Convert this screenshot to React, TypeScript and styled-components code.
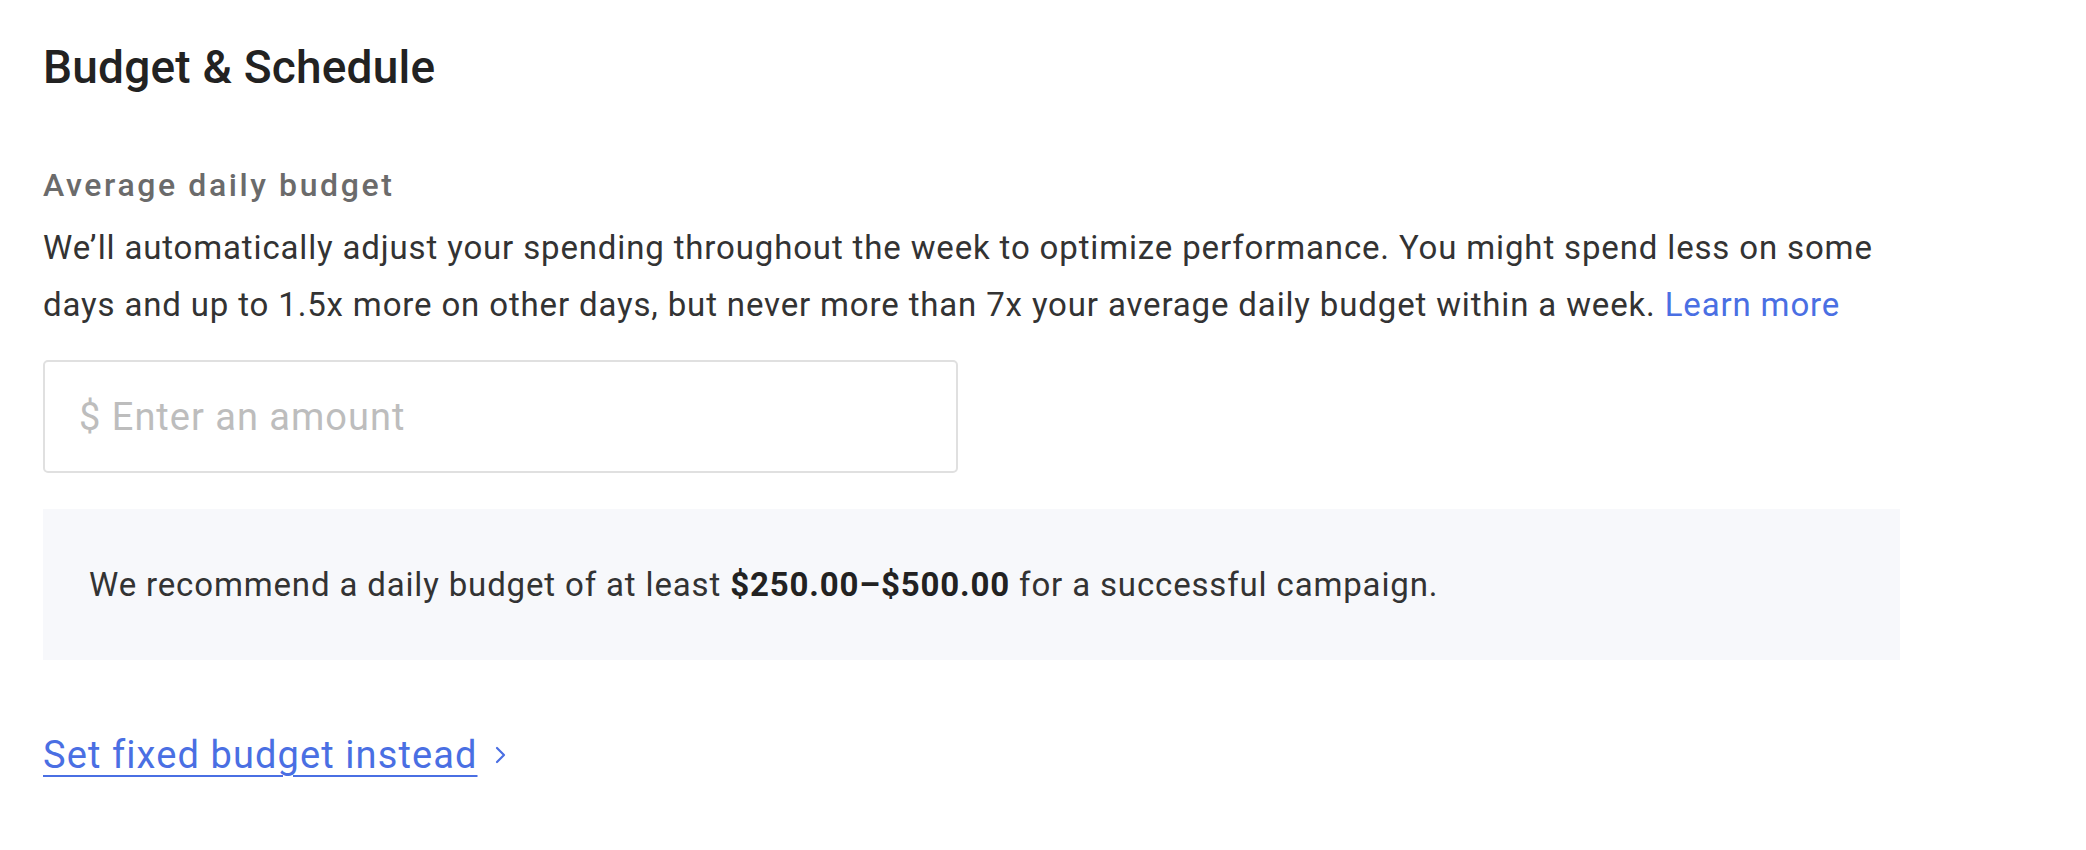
import React from 'react';
import styled, { createGlobalStyle } from 'styled-components';

const GlobalStyle = createGlobalStyle`
  body {
    margin: 0;
    background: #fff;
    font-family: Roboto, "Liberation Sans", sans-serif;
  }
`;

const Page = styled.div`
  padding: 41px 0 0 43px;
  width: 1857px;
`;

const Title = styled.h2`
  margin: 0;
  font-size: 46px;
  line-height: 52px;
  font-weight: 500;
  letter-spacing: 0.2px;
  color: #222;
`;

const FieldLabel = styled.div`
  margin-top: 74px;
  font-size: 32px;
  line-height: 36px;
  font-weight: 500;
  letter-spacing: 2.6px;
  color: #6b6b6b;
`;

const Help = styled.p`
  margin: 16px 0 0;
  font-size: 33px;
  line-height: 57px;
  letter-spacing: 0.85px;
  color: #333;
`;

const Link = styled.a`
  color: #4a6fe3;
  text-decoration: none;
  cursor: pointer;
`;

const AmountInput = styled.input`
  display: block;
  box-sizing: border-box;
  margin-top: 27px;
  width: 915px;
  height: 113px;
  padding: 0 34px;
  border: 2px solid #e0e0e0;
  border-radius: 5px;
  font-family: inherit;
  font-size: 38px;
  letter-spacing: 1px;
  color: #333;
  outline: none;
  &::placeholder {
    color: #bdbdbd;
  }
`;

const Notice = styled.div`
  margin-top: 36px;
  height: 151px;
  display: flex;
  align-items: center;
  padding: 0 46px;
  background: #f7f8fb;
  font-size: 33px;
  line-height: 40px;
  letter-spacing: 0.85px;
  color: #333;
  b {
    font-weight: 700;
    color: #222;
  }
`;

const SwitchRow = styled.div`
  margin-top: 73px;
  display: flex;
  align-items: center;
  gap: 16px;
`;

const SwitchLink = styled(Link)`
  font-size: 38px;
  line-height: 44px;
  letter-spacing: 1.1px;
  text-decoration: underline;
  text-decoration-thickness: 2px;
  text-underline-offset: 7px;
`;

const Chevron = () => (
  <svg width="14" height="20" viewBox="0 0 14 20" fill="none">
    <path d="M3 3l7 7-7 7" stroke="#4a6fe3" strokeWidth="2.2" strokeLinecap="round" strokeLinejoin="round" />
  </svg>
);

export default function App() {
  return (
    <>
      <GlobalStyle />
      <Page>
        <Title>Budget &amp; Schedule</Title>
        <FieldLabel>Average daily budget</FieldLabel>
        <Help>
          We’ll automatically adjust your spending throughout the week to optimize performance. You might spend less on
          some days and up to 1.5x more on other days, but never more than 7x your average daily budget within a week.{' '}
          <Link>Learn more</Link>
        </Help>
        <AmountInput placeholder="$ Enter an amount" />
        <Notice>
          <span>
            We recommend a daily budget of at least <b>$250.00–$500.00</b> for a successful campaign.
          </span>
        </Notice>
        <SwitchRow>
          <SwitchLink>Set fixed budget instead</SwitchLink>
          <Chevron />
        </SwitchRow>
      </Page>
    </>
  );
}
